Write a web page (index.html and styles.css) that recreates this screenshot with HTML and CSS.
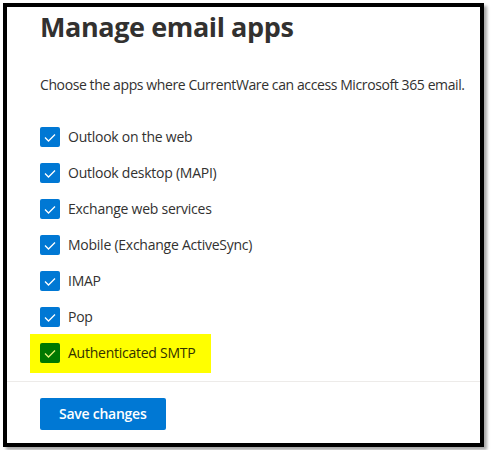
FILE: index.html
```html
<!DOCTYPE html>
<html>

<head>
    <meta charset="utf-8">
    <title>Manage email apps</title>
    <link rel="stylesheet" href="styles.css">
</head>

<body>
    <div class="frame">
        <div class="panel">
            <h1 class="title">Manage email apps</h1>
            <p class="desc">Choose the apps where CurrentWare can access Microsoft 365 email.</p>
            <ul class="apps">
                <li class="app"><span class="box"><svg viewBox="0 0 20 20"><path d="M5 10.5 L8.5 14 L15 7.5"/></svg></span>Outlook on the web</li>
                <li class="app"><span class="box"><svg viewBox="0 0 20 20"><path d="M5 10.5 L8.5 14 L15 7.5"/></svg></span>Outlook desktop (MAPI)</li>
                <li class="app"><span class="box"><svg viewBox="0 0 20 20"><path d="M5 10.5 L8.5 14 L15 7.5"/></svg></span>Exchange web services</li>
                <li class="app"><span class="box"><svg viewBox="0 0 20 20"><path d="M5 10.5 L8.5 14 L15 7.5"/></svg></span>Mobile (Exchange ActiveSync)</li>
                <li class="app"><span class="box"><svg viewBox="0 0 20 20"><path d="M5 10.5 L8.5 14 L15 7.5"/></svg></span>IMAP</li>
                <li class="app"><span class="box"><svg viewBox="0 0 20 20"><path d="M5 10.5 L8.5 14 L15 7.5"/></svg></span>Pop</li>
                <li class="app marked"><span class="box"><svg viewBox="0 0 20 20"><path d="M5 10.5 L8.5 14 L15 7.5"/></svg></span>Authenticated SMTP</li>
            </ul>
        </div>
        <div class="footer">
            <a href="javascript:;" class="btn">Save changes</a>
        </div>
    </div>
</body>

</html>
```

FILE: styles.css
```css
* {
    margin: 0;
    padding: 0;
    box-sizing: border-box;
}

body {
    background: #fff;
    font: 400 14px/20px "Open Sans", Arial, sans-serif;
    letter-spacing: -0.25px;
    color: #323130;
}

.frame {
    width: 481px;
    height: 444px;
    margin: 3px;
    border: 4px solid #000;
    background: #fff;
    box-shadow: 3px 3px 3px rgba(0, 0, 0, 0.35);
    display: flex;
    flex-direction: column;
}

.panel {
    padding: 2px 0 18px 33px;
    border-bottom: 1px solid #edebe9;
}

.title {
    font: 700 27px/36px "Open Sans", Arial, sans-serif;
    letter-spacing: -0.4px;
    color: #323130;
}

.desc {
    margin-top: 30px;
    white-space: nowrap;
    letter-spacing: -0.4px;
}

.apps {
    list-style: none;
    margin-top: 32px;
    display: flex;
    flex-direction: column;
    gap: 16px;
}

.app {
    display: flex;
    align-items: center;
    gap: 8px;
    height: 20px;
}

.box {
    width: 20px;
    height: 20px;
    border-radius: 2px;
    background: #0078d4;
    display: flex;
}

.box svg {
    width: 20px;
    height: 20px;
    fill: none;
    stroke: #fff;
    stroke-width: 1.3;
}

.app.marked {
    align-self: flex-start;
    height: auto;
    background: #ffff00;
    margin: -9px 0 -10px -10px;
    padding: 9px 16px 10px 10px;
    color: #323100;
}

.app.marked .box {
    background: #007800;
}

.app.marked .box svg {
    stroke: #e4f27a;
}

.footer {
    padding: 16px 0 0 33px;
}

.btn {
    display: inline-block;
    height: 32px;
    padding: 0 19px;
    border-radius: 2px;
    background: #0078d4;
    color: #fff;
    font-weight: 600;
    line-height: 32px;
    text-decoration: none;
}
```
